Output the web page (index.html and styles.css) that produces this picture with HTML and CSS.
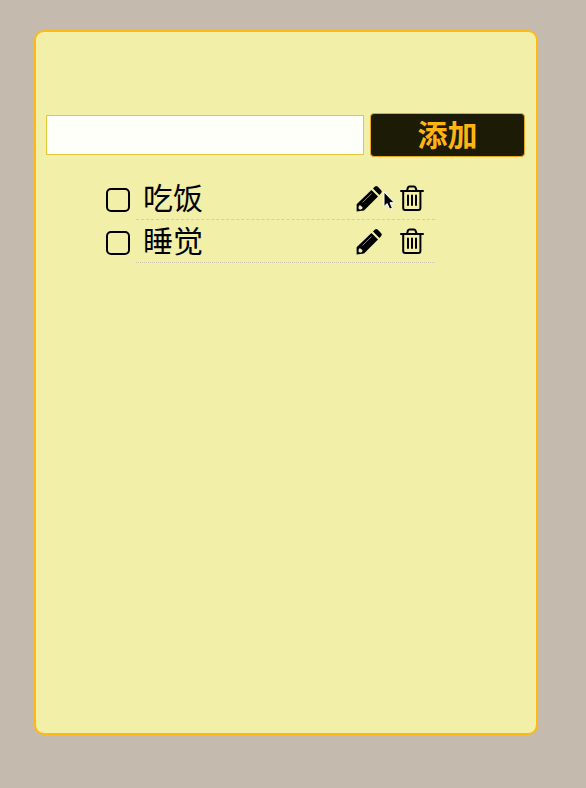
FILE: index.html
```html
<!DOCTYPE html>
<html lang="zh-CN">
<head>
<meta charset="utf-8">
<meta name="viewport" content="width=device-width, initial-scale=1">
<title>待办</title>
<link rel="stylesheet" href="styles.css">
</head>
<body>
<svg class="defs" aria-hidden="true">
  <symbol id="pencil" viewBox="0 0 26 28">
    <path d="M15.4 6 22 12.4 8 26.6 .6 27.6V20.2Z"/>
    <path d="M17 4.6 19 2.6Q20.2 1.4 21.6 2.6L25.2 6.2Q26.4 7.6 25.2 9L23.4 11Z"/>
    <path class="light" d="M3 21.6 4.6 21.4 6.6 23.4 6 25 4 25.8 2.4 24.2Z"/>
    <path class="shine" d="M6.6 18.4 15.6 9.6"/>
  </symbol>
  <symbol id="trash" viewBox="0 0 26 28">
    <path class="line" d="M2 7H24M8 6.6 9 3.4Q9.4 2.4 10.4 2.4H15Q16 2.4 16.4 3.4L17.6 6.6M4.2 7V24Q4.2 26 6.2 26H19.4Q21.4 26 21.4 24V7M9 11.6V21M13 11.6V21M17 11.6V21"/>
  </symbol>
</svg>
<main class="panel">
  <form class="add-form">
    <input class="add-input" type="text" aria-label="新任务">
    <button class="add-button" type="button">添加</button>
  </form>
  <ul class="list">
    <li class="item">
      <input class="check" type="checkbox" id="task-1">
      <div class="row">
        <label class="name" for="task-1">吃饭</label>
        <button class="icon-button" type="button" aria-label="编辑"><svg class="icon"><use href="#pencil"/></svg></button>
        <svg class="cursor" viewBox="0 0 14 20" aria-hidden="true"><path d="M2 1V15.5L5.2 12.6 7.7 18.2 10.4 17 8 11.7H12.3Z"/></svg>
        <button class="icon-button" type="button" aria-label="删除"><svg class="icon"><use href="#trash"/></svg></button>
      </div>
    </li>
    <li class="item">
      <input class="check" type="checkbox" id="task-2">
      <div class="row">
        <label class="name" for="task-2">睡觉</label>
        <button class="icon-button" type="button" aria-label="编辑"><svg class="icon"><use href="#pencil"/></svg></button>
        <button class="icon-button" type="button" aria-label="删除"><svg class="icon"><use href="#trash"/></svg></button>
      </div>
    </li>
  </ul>
</main>
</body>
</html>
```
FILE: styles.css
```css
* {
  box-sizing: border-box;
}

body {
  display: flex;
  min-height: 100vh;
  margin: 0;
  padding: 30px 48px 53px 34px;
  background: #c4baae;
  color: #000;
  font-family: "Liberation Sans", "Noto Sans CJK SC", sans-serif;
}

.defs {
  position: absolute;
  width: 0;
  height: 0;
}

.panel {
  flex: 1;
  min-width: 0;
  padding: 81px 11px 20px 10px;
  border: 2px solid #ffb917;
  border-radius: 10px;
  background: #f1efa8;
}

.add-form {
  display: flex;
  align-items: center;
  gap: 6px;
}

.add-input {
  flex: 1;
  min-width: 0;
  height: 40px;
  padding: 0 8px;
  border: 1px solid #e8c83c;
  border-radius: 0;
  background: #fffffa;
  font: inherit;
  font-size: 24px;
}

.add-button {
  width: 155px;
  height: 44px;
  padding: 2px 0 0;
  border: 1px solid #e9a820;
  border-radius: 4px;
  background: #1b1b06;
  color: #ffb413;
  font: inherit;
  font-size: 30px;
  font-weight: 700;
  line-height: 40px;
}

.list {
  margin: 20px 90px 0 60px;
  padding: 0;
  list-style: none;
}

.item {
  display: flex;
  align-items: center;
  gap: 6px;
}

.check {
  flex: none;
  width: 24px;
  height: 24px;
  margin: 2px 0 0;
  border: 2px solid #000;
  border-radius: 5px;
  appearance: none;
}

.check:checked {
  background: #000;
}

.row {
  position: relative;
  display: flex;
  flex: 1;
  align-items: center;
  gap: 17px;
  height: 43px;
  padding: 0 10px 0 7px;
  border-bottom: 1px dotted #c9c6ad;
}

.item:first-child .row {
  border-bottom: 1px dashed #dbd383;
}

.name {
  flex: 1;
  padding-top: 2px;
  font-size: 30px;
  line-height: 40px;
}

.icon-button {
  width: 26px;
  height: 28px;
  padding: 0;
  border: 0;
  background: none;
}

.icon {
  display: block;
  width: 26px;
  height: 28px;
}

.light {
  fill: #f1efa8;
}

.shine {
  fill: none;
  stroke: #8b8964;
  stroke-width: 1;
}

.line {
  fill: none;
  stroke: #000;
  stroke-width: 2;
  stroke-linecap: round;
}

.cursor {
  position: absolute;
  top: 14px;
  right: 39px;
  width: 14px;
  height: 20px;
  fill: #000;
  stroke: #fff;
  stroke-width: 1;
}
```
